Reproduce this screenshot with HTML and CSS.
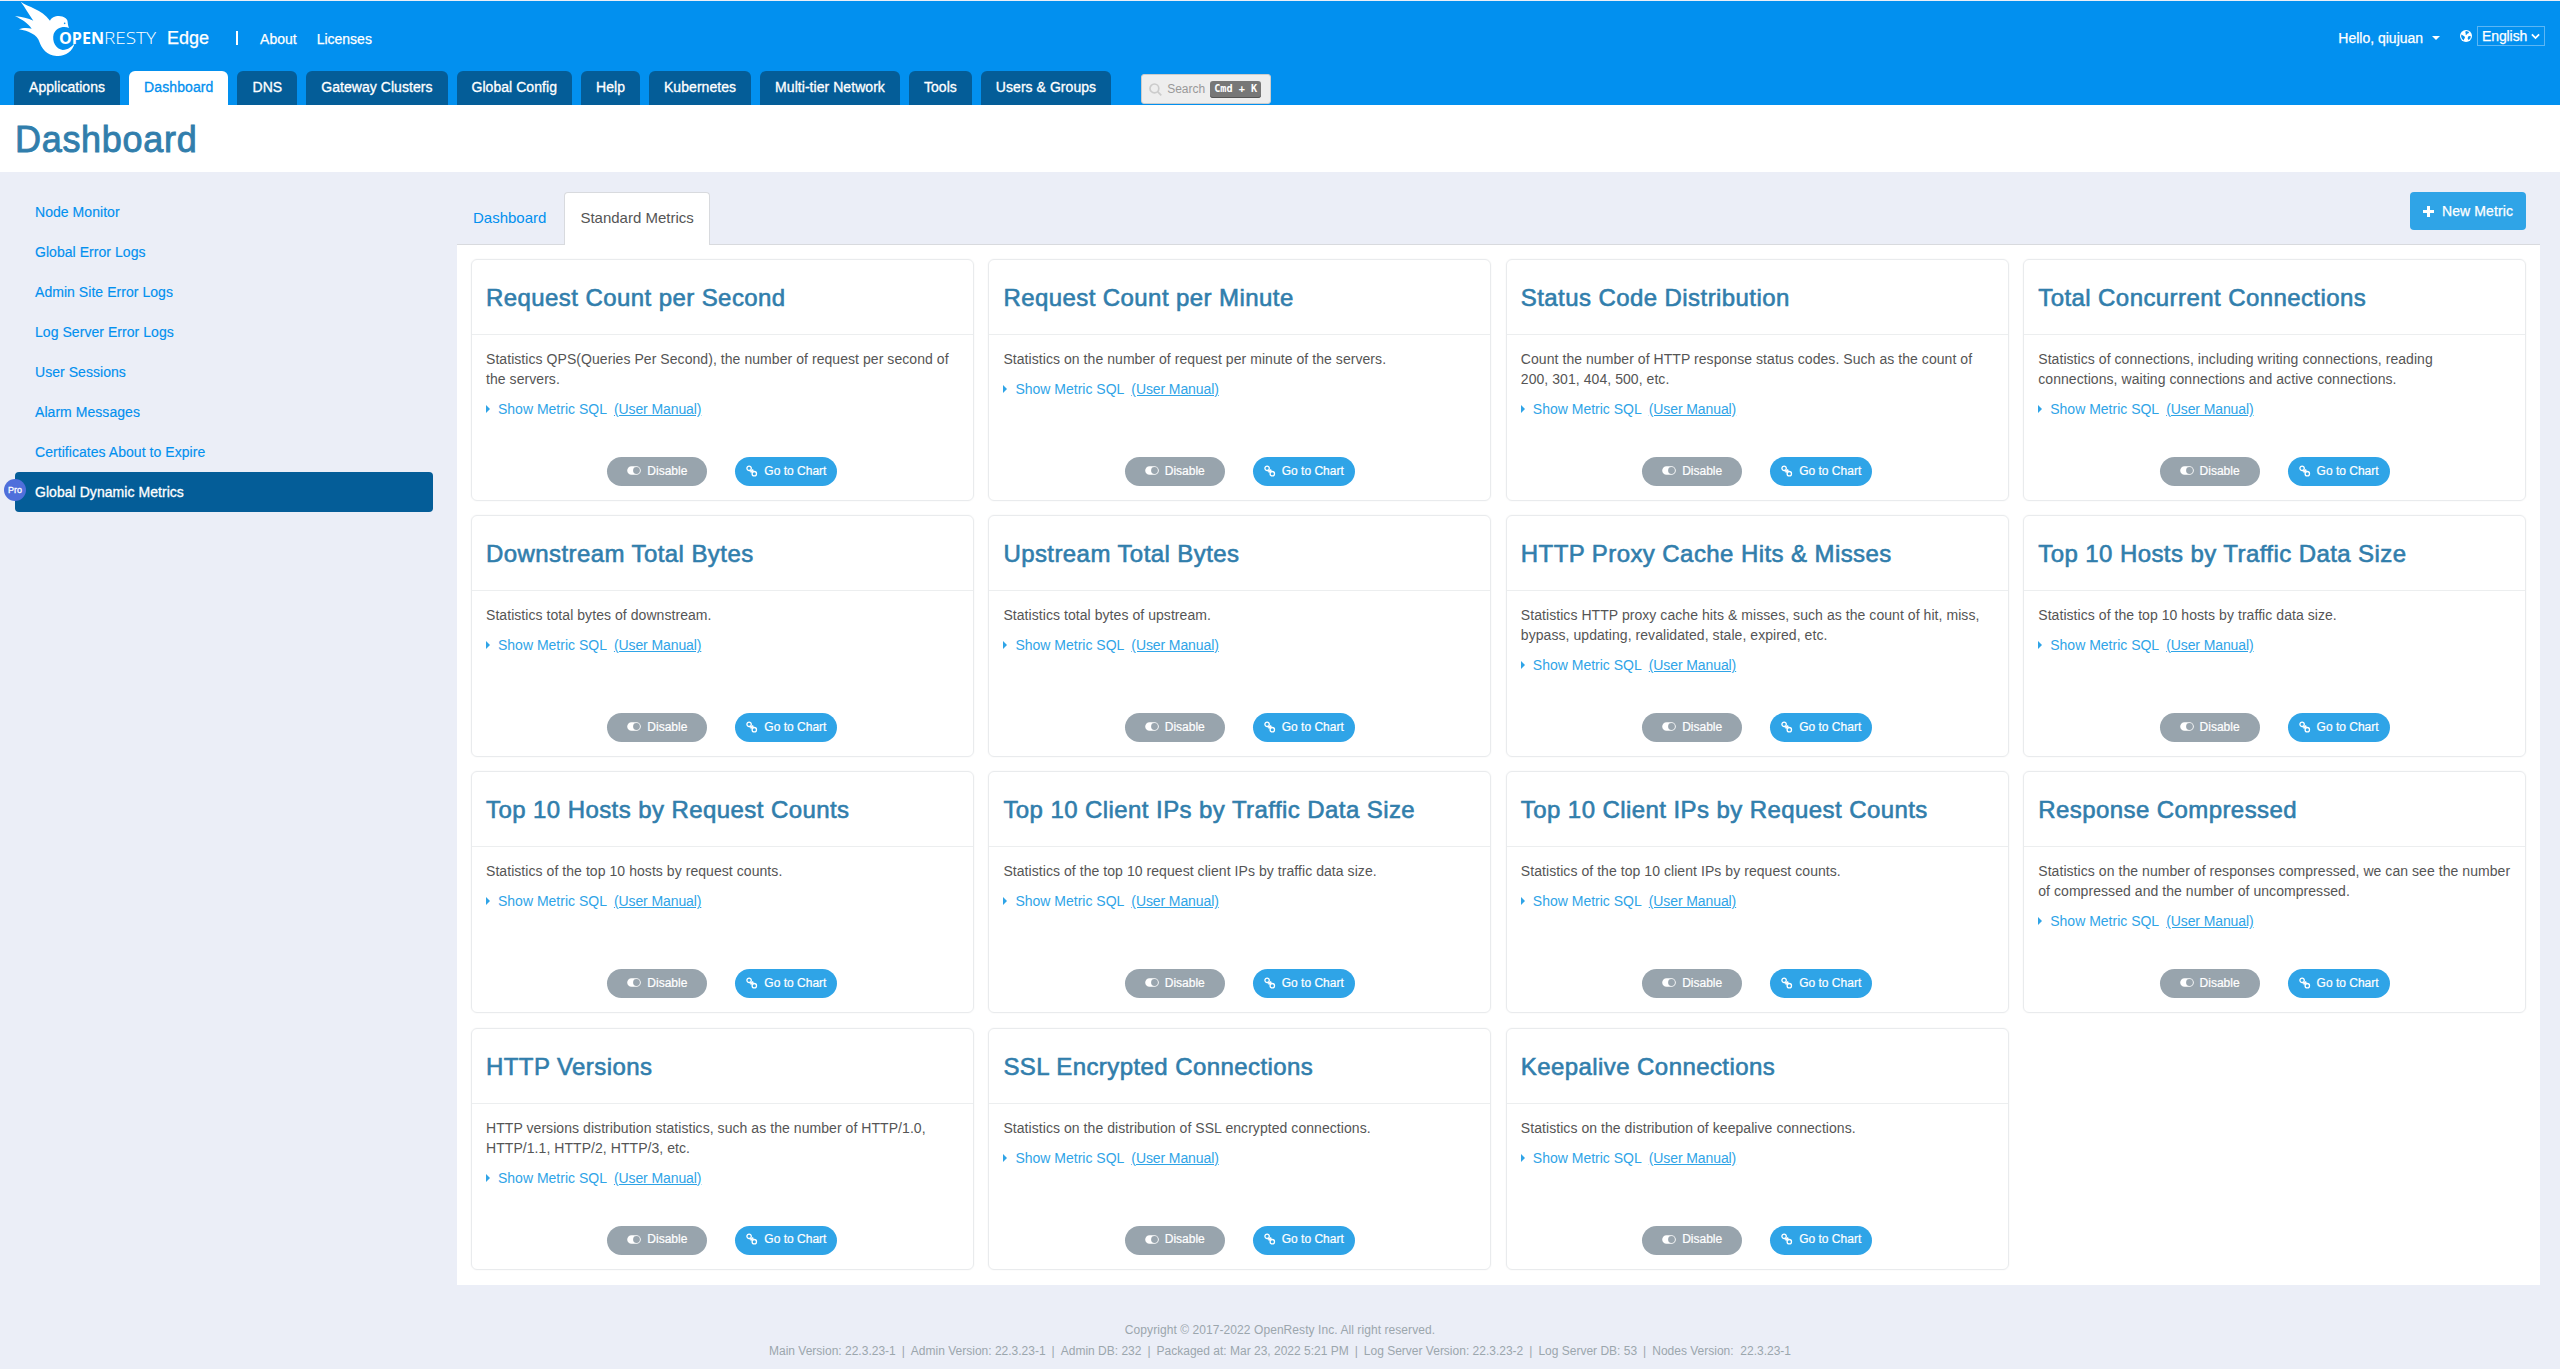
FILE: index.html
```html
<!DOCTYPE html>
<html lang="en">
<head>
    <meta charset="UTF-8">
    <meta name="viewport" content="width=device-width, initial-scale=1.0">
    <title>Dashboard - OpenResty Edge</title>
    <link rel="stylesheet" href="styles.css">
</head>
<body>

    <!-- shared icons -->
    <svg class="icon-defs" width="0" height="0">
        <symbol id="icon-toggle" viewBox="0 0 14 9">
            <path fill="currentColor" fill-rule="evenodd" d="M4.5 0.2h5a4.3 4.3 0 0 1 0 8.6h-5a4.3 4.3 0 0 1 0-8.6zM9.5 1.1a3.4 3.4 0 1 0 0 6.8a3.4 3.4 0 0 0 0-6.8z"/>
        </symbol>
        <symbol id="icon-link" viewBox="0 0 12 12">
            <g fill="none" stroke="currentColor" stroke-width="1.3">
                <circle cx="3.1" cy="3.3" r="2.2"/>
                <circle cx="8.3" cy="8.7" r="2.2"/>
                <path d="M3.6 5.9L5.4 6.1L7.2 4.6M4.6 7.5L6 6L7.8 6.2"/>
            </g>
        </symbol>
    </svg>

    <header class="header">
        <div class="topbar">
            <a class="brand" href="#">
                <svg class="logo" viewBox="0 0 144 56" width="144" height="56">
                    <g transform="translate(-14 -1) scale(0.33333)">
                        <path fill="#fff" d="M62 5C85 22 124 26 150 62C155 50 180 42 197 55C206 62 201 70 207 84C190 76 168 84 161 102C155 125 168 147 188 150C205 150 215 140 224 130C218 155 195 170 170 168C140 166 125 145 118 125C112 105 85 92 57 88C70 82 85 84 95 86C85 70 65 58 45 48C65 50 85 55 100 62C85 40 75 22 62 5Z"/>
                        <circle cx="194" cy="70" r="2.5" fill="#0290ef"/>
                    </g>
                    <text class="logo-open" x="45" y="43" textLength="45" lengthAdjust="spacingAndGlyphs">OPEN</text>
                    <text class="logo-resty" x="90" y="43" textLength="52" lengthAdjust="spacingAndGlyphs">RESTY</text>
                </svg>
                <span class="product">Edge</span>
            </a>
            <span class="divider"></span>
            <a class="top-link" href="#">About</a>
            <a class="top-link" href="#">Licenses</a>
            <div class="user-area">
                <a class="user" href="#">Hello, qiujuan <span class="caret-down"></span></a>
                <svg class="globe" viewBox="0 0 12 12" width="12" height="12">
                    <circle cx="6" cy="6" r="6" fill="#fff"/>
                    <path fill="#0290ef" d="M6.2 1.1L8.6 1.8L9 3L7.6 3.6L6.6 4.8L5.4 4.4L5.8 3L5 2zM1.4 4.6L3 5.6L4.6 6.6L5 7.8L4 9.2L3.6 10.4L1.8 8.4L1.1 6.2zM8.8 6L10.9 6.2L10.3 8.4L8.6 10L7.6 8.4L8 7z"/>
                </svg>
                <span class="lang">English
                    <svg viewBox="0 0 10 7" width="9" height="7"><path d="M1 1.2L5 5.2L9 1.2" fill="none" stroke="#fff" stroke-width="2"/></svg>
                </span>
            </div>
        </div>
        <nav class="main-nav">
            <a href="#">Applications</a>
            <a class="active" href="#">Dashboard</a>
            <a href="#">DNS</a>
            <a href="#">Gateway Clusters</a>
            <a href="#">Global Config</a>
            <a href="#">Help</a>
            <a href="#">Kubernetes</a>
            <a href="#">Multi-tier Network</a>
            <a href="#">Tools</a>
            <a href="#">Users &amp; Groups</a>
            <div class="search">
                <svg viewBox="0 0 13 13" width="13" height="13"><g fill="none" stroke="#ccc" stroke-width="1.7"><circle cx="5.4" cy="5.4" r="4.4"/><path d="M8.6 8.6L12.3 12.3"/></g></svg>
                <span>Search</span>
                <kbd>Cmd + K</kbd>
            </div>
        </nav>
    </header>

    <div class="page-title">
        <h1>Dashboard</h1>
    </div>

    <div class="main">
        <aside class="sidebar">
            <a href="#">Node Monitor</a>
            <a href="#">Global Error Logs</a>
            <a href="#">Admin Site Error Logs</a>
            <a href="#">Log Server Error Logs</a>
            <a href="#">User Sessions</a>
            <a href="#">Alarm Messages</a>
            <a href="#">Certificates About to Expire</a>
            <a class="active" href="#"><span class="pro">Pro</span>Global Dynamic Metrics</a>
        </aside>

        <div class="content">
            <div class="tabs">
                <a href="#">Dashboard</a>
                <a class="active" href="#">Standard Metrics</a>
                <button class="new-metric">
                    <svg viewBox="0 0 11 11" width="11" height="11"><path d="M5.5 0V11M0 5.5H11" stroke="#fff" stroke-width="3"/></svg>
                    New Metric
                </button>
            </div>

            <div class="panel">
                <div class="card">
                    <h3>Request Count per Second</h3>
                    <div class="card-body">
                        <p>Statistics QPS(Queries Per Second), the number of request per second of the servers.</p>
                        <div class="sql"><i></i><a href="#">Show Metric SQL</a><a class="manual" href="#">(User Manual)</a></div>
                    </div>
                    <div class="actions">
                        <button class="disable"><svg width="14" height="9"><use href="#icon-toggle"/></svg>Disable</button>
                        <button class="chart"><svg width="12" height="12"><use href="#icon-link"/></svg>Go to Chart</button>
                    </div>
                </div>
                <div class="card">
                    <h3>Request Count per Minute</h3>
                    <div class="card-body">
                        <p>Statistics on the number of request per minute of the servers.</p>
                        <div class="sql"><i></i><a href="#">Show Metric SQL</a><a class="manual" href="#">(User Manual)</a></div>
                    </div>
                    <div class="actions">
                        <button class="disable"><svg width="14" height="9"><use href="#icon-toggle"/></svg>Disable</button>
                        <button class="chart"><svg width="12" height="12"><use href="#icon-link"/></svg>Go to Chart</button>
                    </div>
                </div>
                <div class="card">
                    <h3>Status Code Distribution</h3>
                    <div class="card-body">
                        <p>Count the number of HTTP response status codes. Such as the count of 200, 301, 404, 500, etc.</p>
                        <div class="sql"><i></i><a href="#">Show Metric SQL</a><a class="manual" href="#">(User Manual)</a></div>
                    </div>
                    <div class="actions">
                        <button class="disable"><svg width="14" height="9"><use href="#icon-toggle"/></svg>Disable</button>
                        <button class="chart"><svg width="12" height="12"><use href="#icon-link"/></svg>Go to Chart</button>
                    </div>
                </div>
                <div class="card">
                    <h3>Total Concurrent Connections</h3>
                    <div class="card-body">
                        <p>Statistics of connections, including writing connections, reading connections, waiting connections and active connections.</p>
                        <div class="sql"><i></i><a href="#">Show Metric SQL</a><a class="manual" href="#">(User Manual)</a></div>
                    </div>
                    <div class="actions">
                        <button class="disable"><svg width="14" height="9"><use href="#icon-toggle"/></svg>Disable</button>
                        <button class="chart"><svg width="12" height="12"><use href="#icon-link"/></svg>Go to Chart</button>
                    </div>
                </div>

                <div class="card">
                    <h3>Downstream Total Bytes</h3>
                    <div class="card-body">
                        <p>Statistics total bytes of downstream.</p>
                        <div class="sql"><i></i><a href="#">Show Metric SQL</a><a class="manual" href="#">(User Manual)</a></div>
                    </div>
                    <div class="actions">
                        <button class="disable"><svg width="14" height="9"><use href="#icon-toggle"/></svg>Disable</button>
                        <button class="chart"><svg width="12" height="12"><use href="#icon-link"/></svg>Go to Chart</button>
                    </div>
                </div>
                <div class="card">
                    <h3>Upstream Total Bytes</h3>
                    <div class="card-body">
                        <p>Statistics total bytes of upstream.</p>
                        <div class="sql"><i></i><a href="#">Show Metric SQL</a><a class="manual" href="#">(User Manual)</a></div>
                    </div>
                    <div class="actions">
                        <button class="disable"><svg width="14" height="9"><use href="#icon-toggle"/></svg>Disable</button>
                        <button class="chart"><svg width="12" height="12"><use href="#icon-link"/></svg>Go to Chart</button>
                    </div>
                </div>
                <div class="card">
                    <h3>HTTP Proxy Cache Hits &amp; Misses</h3>
                    <div class="card-body">
                        <p>Statistics HTTP proxy cache hits &amp; misses, such as the count of hit, miss, bypass, updating, revalidated, stale, expired, etc.</p>
                        <div class="sql"><i></i><a href="#">Show Metric SQL</a><a class="manual" href="#">(User Manual)</a></div>
                    </div>
                    <div class="actions">
                        <button class="disable"><svg width="14" height="9"><use href="#icon-toggle"/></svg>Disable</button>
                        <button class="chart"><svg width="12" height="12"><use href="#icon-link"/></svg>Go to Chart</button>
                    </div>
                </div>
                <div class="card">
                    <h3>Top 10 Hosts by Traffic Data Size</h3>
                    <div class="card-body">
                        <p>Statistics of the top 10 hosts by traffic data size.</p>
                        <div class="sql"><i></i><a href="#">Show Metric SQL</a><a class="manual" href="#">(User Manual)</a></div>
                    </div>
                    <div class="actions">
                        <button class="disable"><svg width="14" height="9"><use href="#icon-toggle"/></svg>Disable</button>
                        <button class="chart"><svg width="12" height="12"><use href="#icon-link"/></svg>Go to Chart</button>
                    </div>
                </div>

                <div class="card">
                    <h3>Top 10 Hosts by Request Counts</h3>
                    <div class="card-body">
                        <p>Statistics of the top 10 hosts by request counts.</p>
                        <div class="sql"><i></i><a href="#">Show Metric SQL</a><a class="manual" href="#">(User Manual)</a></div>
                    </div>
                    <div class="actions">
                        <button class="disable"><svg width="14" height="9"><use href="#icon-toggle"/></svg>Disable</button>
                        <button class="chart"><svg width="12" height="12"><use href="#icon-link"/></svg>Go to Chart</button>
                    </div>
                </div>
                <div class="card">
                    <h3>Top 10 Client IPs by Traffic Data Size</h3>
                    <div class="card-body">
                        <p>Statistics of the top 10 request client IPs by traffic data size.</p>
                        <div class="sql"><i></i><a href="#">Show Metric SQL</a><a class="manual" href="#">(User Manual)</a></div>
                    </div>
                    <div class="actions">
                        <button class="disable"><svg width="14" height="9"><use href="#icon-toggle"/></svg>Disable</button>
                        <button class="chart"><svg width="12" height="12"><use href="#icon-link"/></svg>Go to Chart</button>
                    </div>
                </div>
                <div class="card">
                    <h3>Top 10 Client IPs by Request Counts</h3>
                    <div class="card-body">
                        <p>Statistics of the top 10 client IPs by request counts.</p>
                        <div class="sql"><i></i><a href="#">Show Metric SQL</a><a class="manual" href="#">(User Manual)</a></div>
                    </div>
                    <div class="actions">
                        <button class="disable"><svg width="14" height="9"><use href="#icon-toggle"/></svg>Disable</button>
                        <button class="chart"><svg width="12" height="12"><use href="#icon-link"/></svg>Go to Chart</button>
                    </div>
                </div>
                <div class="card">
                    <h3>Response Compressed</h3>
                    <div class="card-body">
                        <p>Statistics on the number of responses compressed, we can see the number of compressed and the number of uncompressed.</p>
                        <div class="sql"><i></i><a href="#">Show Metric SQL</a><a class="manual" href="#">(User Manual)</a></div>
                    </div>
                    <div class="actions">
                        <button class="disable"><svg width="14" height="9"><use href="#icon-toggle"/></svg>Disable</button>
                        <button class="chart"><svg width="12" height="12"><use href="#icon-link"/></svg>Go to Chart</button>
                    </div>
                </div>

                <div class="card">
                    <h3>HTTP Versions</h3>
                    <div class="card-body">
                        <p>HTTP versions distribution statistics, such as the number of HTTP/1.0, HTTP/1.1, HTTP/2, HTTP/3, etc.</p>
                        <div class="sql"><i></i><a href="#">Show Metric SQL</a><a class="manual" href="#">(User Manual)</a></div>
                    </div>
                    <div class="actions">
                        <button class="disable"><svg width="14" height="9"><use href="#icon-toggle"/></svg>Disable</button>
                        <button class="chart"><svg width="12" height="12"><use href="#icon-link"/></svg>Go to Chart</button>
                    </div>
                </div>
                <div class="card">
                    <h3>SSL Encrypted Connections</h3>
                    <div class="card-body">
                        <p>Statistics on the distribution of SSL encrypted connections.</p>
                        <div class="sql"><i></i><a href="#">Show Metric SQL</a><a class="manual" href="#">(User Manual)</a></div>
                    </div>
                    <div class="actions">
                        <button class="disable"><svg width="14" height="9"><use href="#icon-toggle"/></svg>Disable</button>
                        <button class="chart"><svg width="12" height="12"><use href="#icon-link"/></svg>Go to Chart</button>
                    </div>
                </div>
                <div class="card">
                    <h3>Keepalive Connections</h3>
                    <div class="card-body">
                        <p>Statistics on the distribution of keepalive connections.</p>
                        <div class="sql"><i></i><a href="#">Show Metric SQL</a><a class="manual" href="#">(User Manual)</a></div>
                    </div>
                    <div class="actions">
                        <button class="disable"><svg width="14" height="9"><use href="#icon-toggle"/></svg>Disable</button>
                        <button class="chart"><svg width="12" height="12"><use href="#icon-link"/></svg>Go to Chart</button>
                    </div>
                </div>
            </div>
        </div>
    </div>

    <footer>
        <div class="copyright">Copyright © 2017-2022 OpenResty Inc. All right reserved.</div>
        <div class="versions">
            <span>Main Version: 22.3.23-1</span>
            <span>Admin Version: 22.3.23-1</span>
            <span>Admin DB: 232</span>
            <span>Packaged at: Mar 23, 2022 5:21 PM</span>
            <span>Log Server Version: 22.3.23-2</span>
            <span>Log Server DB: 53</span>
            <span>Nodes Version: &nbsp;22.3.23-1</span>
        </div>
    </footer>

</body>
</html>
```
FILE: styles.css
```css
* {
    box-sizing: border-box;
}
body {
    margin: 0;
    font-family: 'Helvetica Neue', Helvetica, 'Liberation Sans', Arial, sans-serif;
    font-size: 14px;
    line-height: 20px;
    color: #555;
    background-color: #ebeef7;
}
a {
    color: #0290ef;
    text-decoration: none;
}
button {
    font-family: inherit;
    border: none;
    color: white;
    cursor: pointer;
}
.icon-defs {
    display: block;
}

/* header */
.header {
    height: 105px;
    background-color: #0290ef;
    border-top: 1px solid #ebeef7;
}
.topbar {
    display: flex;
    height: 70px;
    padding: 0 15px 0 14px;
    color: white;
}
.topbar a {
    color: white;
    -webkit-text-stroke: 0.25px;
}
.brand {
    display: flex;
}
.logo-open,
.logo-resty {
    font-family: 'Open Sans', sans-serif;
    font-size: 16px;
    fill: white;
    stroke: none;
}
.logo-open {
    font-weight: 700;
}
.logo-resty {
    font-weight: 300;
}
.product {
    margin: 27px 0 0 9px;
    font-size: 18px;
}
.divider {
    width: 2px;
    height: 14px;
    margin: 30px 22px 0 27px;
    background-color: white;
}
.top-link {
    margin: 28px 20px 0 0;
}
.user-area {
    display: flex;
    margin-left: auto;
}
.user {
    margin-top: 27px;
}
.caret-down {
    display: inline-block;
    margin: 0 0 3px 5px;
    border: 4px solid transparent;
    border-top-color: white;
    border-bottom: 0;
}
.globe {
    margin: 29px 5px 0 20px;
}
.lang {
    display: flex;
    align-items: center;
    justify-content: space-between;
    width: 68px;
    height: 20px;
    margin-top: 25px;
    padding: 0 4px;
    border: 1px solid #5cb6f4;
    letter-spacing: -0.1px;
    -webkit-text-stroke: 0.25px;
}

/* main navigation */
.main-nav {
    display: flex;
    gap: 9px;
    padding-left: 14px;
}
.main-nav a {
    height: 34px;
    padding: 6px 15px 0;
    border-radius: 6px 6px 0 0;
    background-color: #045d98;
    color: white;
    letter-spacing: 0.05px;
    -webkit-text-stroke: 0.3px;
}
.main-nav a.active {
    background-color: white;
    color: #0290ef;
    letter-spacing: 0.1px;
}
.search {
    display: flex;
    align-items: center;
    width: 130px;
    height: 30px;
    margin: 3px 0 0 21px;
    padding-left: 7px;
    border: 1px solid #ccc;
    border-radius: 3px;
    background-color: #eee;
    color: #999;
    font-size: 12px;
}
.search span {
    margin: 0 5px;
}
kbd {
    height: 17px;
    padding: 0 4px;
    border-radius: 3px;
    background-color: #777;
    box-shadow: inset 0 -1px 0 #555;
    color: white;
    font: bold 10.2px/16px 'DejaVu Sans Mono', monospace;
    white-space: nowrap;
}

.page-title {
    height: 67px;
    padding-left: 15px;
    background-color: white;
}
h1 {
    margin: 0;
    padding-top: 15px;
    color: #317eac;
    font-size: 36px;
    font-weight: 400;
    line-height: 40px;
    letter-spacing: 0.7px;
    -webkit-text-stroke: 0.9px;
}

/* layout */
.main {
    display: flex;
    padding: 20px 20px 0 15px;
}
.sidebar {
    width: 418px;
    margin-right: 24px;
}
.sidebar a {
    display: block;
    position: relative;
    height: 40px;
    padding: 10px 20px;
    border-radius: 4px;
    letter-spacing: 0.05px;
    -webkit-text-stroke: 0.15px;
}
.sidebar a.active {
    background-color: #045d98;
    color: white;
    -webkit-text-stroke: 0.3px;
}
.pro {
    position: absolute;
    left: -11px;
    top: 7px;
    width: 22px;
    height: 22px;
    border-radius: 50%;
    background-color: #4f6fdb;
    font-size: 9px;
    line-height: 22px;
    text-align: center;
}
.content {
    flex: 1;
}

/* tabs */
.tabs {
    display: flex;
    height: 53px;
    border-bottom: 1px solid #d8dade;
}
.tabs a {
    height: 53px;
    margin-right: 2px;
    padding: 15px 15px 0;
    border: 1px solid transparent;
    border-bottom: none;
    border-radius: 4px 4px 0 0;
    font-size: 15px;
}
.tabs a.active {
    border-color: #d8dade;
    background-color: white;
    color: #555;
}
.new-metric {
    display: flex;
    align-items: center;
    gap: 8px;
    height: 38px;
    margin: 0 14px 0 auto;
    padding: 0 13px;
    border-radius: 4px;
    background-color: #2fa4e7;
    font-size: 14px;
    letter-spacing: 0.1px;
    -webkit-text-stroke: 0.25px;
}

/* metric cards */
.panel {
    display: grid;
    grid-template-columns: repeat(4, 1fr);
    gap: 14.2px 14.67px;
    padding: 14px 14px 15px;
    background-color: white;
}
.card {
    display: flex;
    flex-direction: column;
    height: 242px;
    border: 1px solid #e9ebed;
    border-radius: 6px;
    box-shadow: 0 0 2px rgba(0, 0, 0, 0.05);
}
h3 {
    margin: 0;
    padding: 25px 14px 24px;
    border-bottom: 1px solid #eceeef;
    color: #317eac;
    font-size: 24px;
    font-weight: 400;
    line-height: 25px;
    letter-spacing: 0.42px;
    -webkit-text-stroke: 0.6px;
}
.card-body {
    padding: 14px 14px 0;
}
.card-body p {
    margin: 0 0 10px;
    letter-spacing: 0.06px;
}
.sql {
    display: flex;
    align-items: center;
}
.sql i {
    margin-right: 8px;
    border: 4px solid transparent;
    border-left-color: #2fa4e7;
    border-right: 0;
}
.sql a {
    color: #2fa4e7;
}
.sql .manual {
    margin-left: 7px;
    letter-spacing: -0.1px;
    text-decoration: underline;
}
.actions {
    display: flex;
    justify-content: center;
    gap: 28px;
    margin: auto 0 14px;
}
.actions button {
    display: flex;
    align-items: center;
    justify-content: center;
    gap: 6px;
    height: 29px;
    padding: 0 0 2px;
    border-radius: 15px;
    font-size: 12px;
    -webkit-text-stroke: 0.2px;
}
.disable {
    width: 100px;
    background-color: #98a4ad;
}
.chart {
    width: 102px;
    background-color: #2fa4e7;
}

footer {
    padding-top: 35px;
    color: #9ba6ad;
    font-size: 12px;
    line-height: 21px;
    text-align: center;
}
.copyright {
    letter-spacing: 0.07px;
}
.versions {
    display: flex;
    justify-content: center;
}
.versions span + span::before {
    content: '|';
    margin: 0 6px;
}
```
